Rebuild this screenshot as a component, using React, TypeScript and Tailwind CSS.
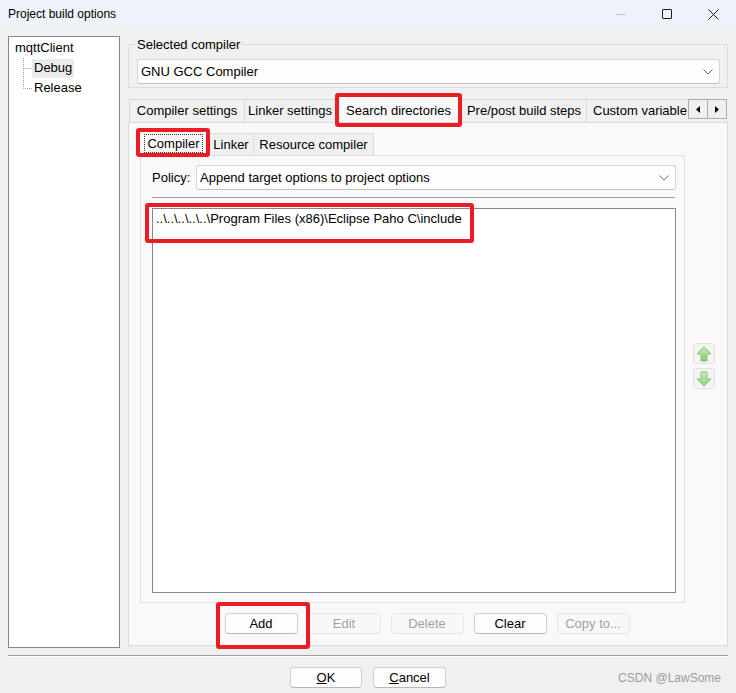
import React from "react";

function Chevron() {
  return (
    <svg width="10" height="6" viewBox="0 0 10 6">
      <path d="M0.5 0.5 L5 5 L9.5 0.5" fill="none" stroke="#6b6b6b" strokeWidth="1" />
    </svg>
  );
}

function GreenArrow({ down }: { down?: boolean }) {
  const id = down ? "gd" : "gu";
  return (
    <div className="w-[22px] h-[21px] border border-[#e2e2e2] rounded-[3px] bg-[#f5f5f5] flex items-center justify-center">
      <svg width="16" height="16" viewBox="0 0 16 16">
        <defs>
          <linearGradient id={id} x1="0" y1="0" x2="0" y2="1">
            <stop offset="0" stopColor={down ? "#8fd07a" : "#c9efb8"} />
            <stop offset="1" stopColor={down ? "#c9efb8" : "#86c96f"} />
          </linearGradient>
        </defs>
        <g transform={down ? "rotate(180 8 8)" : undefined}>
          <path
            d="M8 1 L15 8 L11 8 L11 15 L5 15 L5 8 L1 8 Z"
            fill={`url(#${id})`}
            stroke="#8cbf76"
            strokeWidth="1"
            strokeLinejoin="round"
          />
        </g>
      </svg>
    </div>
  );
}

function Btn({ label, disabled, w = "w-[73px]" }: { label: React.ReactNode; disabled?: boolean; w?: string }) {
  return (
    <div
      className={
        disabled
          ? `${w} h-[21px] rounded-[4px] border border-[#e6e6e6] bg-[#f8f8f8] text-[#a3a3a3] text-[13px] leading-[19px] flex items-center justify-center`
          : `${w} h-[21px] rounded-[4px] border border-[#d0d0d0] border-b-[#b8b8b8] bg-[#fdfdfd] text-black text-[13px] leading-[19px] flex items-center justify-center`
      }
    >
      {label}
    </div>
  );
}

function Tab({ label, w, first }: { label: string; w: string; first?: boolean }) {
  return (
    <div
      className={`${w} ${first ? "" : "-ml-px"} shrink-0 h-[23px] border border-b-0 border-[#d9d9d9] bg-[#f0f0f0] flex items-center justify-center text-[13px] whitespace-nowrap overflow-hidden`}
    >
      {label}
    </div>
  );
}

export default function App() {
  return (
    <div className="relative w-[736px] h-[693px] bg-[#f0f0f0] font-['Liberation_Sans',Arial,sans-serif] text-black flex flex-col overflow-hidden">
      {/* Title bar */}
      <div className="h-[28px] bg-[#eef2f9] flex items-center shrink-0">
        <div className="pl-[8px] text-[12px] leading-[16px]">Project build options</div>
        <div className="ml-auto flex h-full">
          <div className="w-[46px] h-full flex items-center justify-center">
            <div className="w-[10px] h-px bg-[#c4c4c4]" />
          </div>
          <div className="w-[46px] h-full flex items-center justify-center">
            <div className="w-[10px] h-[10px] border border-[#1c1c1c] rounded-[1px]" />
          </div>
          <div className="w-[46px] h-full flex items-center justify-center">
            <svg width="11" height="11" viewBox="0 0 11 11">
              <path d="M0.5 0.5 L10.5 10.5 M10.5 0.5 L0.5 10.5" stroke="#1c1c1c" strokeWidth="1" />
            </svg>
          </div>
        </div>
      </div>

      {/* Body */}
      <div className="mt-[8px] px-[8px] flex items-start">
        {/* Tree */}
        <div className="w-[112px] h-[612px] border border-[#828790] bg-white text-[13px] shrink-0 pt-[1px]">
          <div className="h-[20px] flex items-center pl-[6px]">mqttClient</div>
          <div className="h-[20px] flex items-center pl-[14px]">
            <svg width="9" height="20" viewBox="0 0 9 20" className="shrink-0">
              <path d="M0.5 0 L0.5 20 M0.5 10.5 L9 10.5" stroke="#9a9a9a" strokeWidth="1" strokeDasharray="1 1" />
            </svg>
            <span className="bg-[#ebebeb] h-[19px] px-[2px] flex items-center">Debug</span>
          </div>
          <div className="h-[20px] flex items-center pl-[14px]">
            <svg width="9" height="20" viewBox="0 0 9 20" className="shrink-0">
              <path d="M0.5 0 L0.5 10.5 L9 10.5" fill="none" stroke="#9a9a9a" strokeWidth="1" strokeDasharray="1 1" />
            </svg>
            <span className="h-[19px] px-[2px] flex items-center">Release</span>
          </div>
        </div>

        {/* Right column */}
        <div className="ml-[8px] w-[600px] flex flex-col">
          <fieldset className="border border-[#dcdcdc] pl-[8px] pr-[7px] pt-[6px] pb-[3px] rounded-[2px]">
            <legend className="text-[13px] leading-[16px] px-[1px] -ml-px pt-[1px]">Selected compiler</legend>
            <div className="h-[25px] border border-[#d6d6d6] border-b-[#c2c2c2] bg-[#fdfdfd] rounded-[3px] flex items-center pl-[3px] pr-[6px] text-[13px]">
              <span>GNU GCC Compiler</span>
              <span className="ml-auto">
                <Chevron />
              </span>
            </div>
          </fieldset>

          {/* Tabs row */}
          <div className="mt-[7px] h-[27px] flex items-end">
            <div className="w-[560px] pl-px flex items-end overflow-hidden h-full">
              <Tab label="Compiler settings" w="w-[116px]" first />
              <Tab label="Linker settings" w="w-[92px]" />
              <div className="-ml-px relative z-10 w-[127px] shrink-0 h-[27px] mb-[-1px] border border-b-0 border-[#d9d9d9] bg-[#f9f9f9] flex items-start pt-[4px] justify-center text-[13px] whitespace-nowrap">
                Search directories
              </div>
              <Tab label="Pre/post build steps" w="w-[126px]" />
              <div className="-ml-px shrink-0 w-[104px] h-[23px] border border-b-0 border-r-0 border-[#d9d9d9] bg-[#f0f0f0] flex items-center pl-[6px] text-[13px] whitespace-nowrap">
                Custom variable
              </div>
            </div>
            <div className="flex self-start mt-[4px]">
              <div className="w-[20px] h-[20px] border border-[#adadad] bg-[#f0f0f0] flex items-center justify-center">
                <svg width="4" height="7" viewBox="0 0 4 7">
                  <path d="M4 0 L0 3.5 L4 7 Z" fill="#000" />
                </svg>
              </div>
              <div className="-ml-px w-[20px] h-[20px] border border-[#adadad] bg-[#f0f0f0] flex items-center justify-center">
                <svg width="4" height="7" viewBox="0 0 4 7">
                  <path d="M0 0 L4 3.5 L0 7 Z" fill="#000" />
                </svg>
              </div>
            </div>
          </div>

          {/* Tab panel */}
          <div className="h-[524px] border border-[#d9d9d9] bg-[#f9f9f9] flex flex-col">
            <div className="flex items-start pt-[7px] pl-[11px]">
              {/* inner column */}
              <div className="w-[545px] flex flex-col">
                <div className="h-[25px] flex items-end -ml-[2px]">
                  <div className="relative z-10 w-[71px] h-[26px] mb-[-1px] border border-b-0 border-[#dcdcdc] bg-[#f9f9f9] flex items-center justify-center text-[13px]">
                    <span className="border border-dotted border-[#333] px-[2px] leading-[17px]">Compiler</span>
                  </div>
                  <div className="-ml-px w-[46px] h-[22px] border border-b-0 border-[#dcdcdc] bg-[#f0f0f0] flex items-center justify-center text-[13px]">
                    Linker
                  </div>
                  <div className="-ml-px w-[121px] h-[22px] border border-b-0 border-[#dcdcdc] bg-[#f0f0f0] flex items-center justify-center text-[13px]">
                    Resource compiler
                  </div>
                </div>
                <div className="h-[448px] border border-[#dfdfdf] bg-[#f9f9f9] pl-[11px] pt-[9px]">
                  <div className="flex items-center h-[25px] text-[13px]">
                    <span className="w-[44px]">Policy:</span>
                    <div className="w-[480px] h-[25px] border border-[#d6d6d6] border-b-[#c2c2c2] bg-[#fdfdfd] rounded-[3px] flex items-center pl-[3px] pr-[6px]">
                      <span>Append target options to project options</span>
                      <span className="ml-auto">
                        <Chevron />
                      </span>
                    </div>
                  </div>
                  <div className="mt-[7px] w-[523px] h-px bg-[#a0a0a0]" />
                  <div className="mt-[10px] w-[524px] h-[385px] border border-[#828790] bg-white pl-[3px] pt-[2px]">
                    <div className="text-[13px] leading-[16px] whitespace-nowrap">
                      ..\..\..\..\..\Program Files (x86)\Eclipse Paho C\include
                    </div>
                  </div>
                </div>
              </div>
              {/* arrows */}
              <div className="ml-[8px] mt-[213px] flex flex-col gap-[4px]">
                <GreenArrow />
                <GreenArrow down />
              </div>
            </div>
            <div className="mt-[10px] flex justify-center gap-[10px] pr-[2px]">
              <Btn label="Add" />
              <Btn label="Edit" disabled />
              <Btn label="Delete" disabled />
              <Btn label="Clear" />
              <Btn label="Copy to..." disabled />
            </div>
          </div>
        </div>
      </div>

      {/* Bottom separator */}
      <div className="mt-[7px] mx-[8px] h-px bg-[#a0a0a0]" />
      <div className="mx-[8px] h-px bg-white" />

      <div className="mt-[10px] flex justify-center gap-[11px]">
        <Btn
          w="w-[72px]"
          label={
            <span>
              <u>O</u>K
            </span>
          }
        />
        <Btn
          w="w-[73px]"
          label={
            <span>
              <u>C</u>ancel
            </span>
          }
        />
      </div>

      {/* Watermark */}
      <div className="absolute right-[15px] top-[670px] text-[12px] leading-[16px] text-[#9c9c9c]">CSDN @LawSome</div>

      {/* Red annotation boxes */}
      <div className="absolute left-[335px] top-[93px] w-[127px] h-[34px] border-[4px] border-[#ec1c24] rounded-[3px] z-20" />
      <div className="absolute left-[136px] top-[128px] w-[74px] h-[29px] border-[4px] border-[#ec1c24] rounded-[3px] z-20" />
      <div className="absolute left-[145px] top-[203px] w-[329px] h-[40px] border-[4px] border-[#ec1c24] rounded-[3px] z-20" />
      <div className="absolute left-[216px] top-[602px] w-[94px] h-[47px] border-[4px] border-[#ec1c24] rounded-[3px] z-20" />
    </div>
  );
}
